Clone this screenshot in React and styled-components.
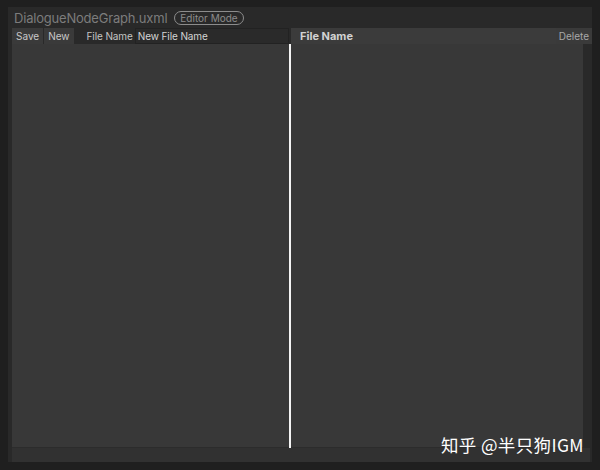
import React from "react";
import styled, { createGlobalStyle } from "styled-components";

const Global = createGlobalStyle`
  html, body { margin: 0; padding: 0; background: #1f1f1f; }
  body { font-family: Inter, "Noto Sans", "Liberation Sans", sans-serif; }
  * { box-sizing: border-box; }
`;

const Screen = styled.div`
  width: 600px;
  height: 470px;
  background: #1f1f1f;
  padding: 7px 8px 8px 8px;
  position: relative;
`;

const Window = styled.div`
  width: 584px;
  height: 455px;
  background: #292929;
  display: flex;
  flex-direction: column;
`;

const TitleBar = styled.div`
  height: 21px;
  display: flex;
  align-items: center;
  gap: 7px;
  padding-left: 6px;
`;

const Title = styled.span`
  font-size: 13px;
  color: #7c7c7c;
  letter-spacing: -0.2px;
`;

const Pill = styled.span`
  font-size: 10px;
  color: #8c8c8c;
  border: 1px solid #8c8c8c;
  border-radius: 8px;
  padding: 0 5px;
  line-height: 12px;
`;

const Body = styled.div`
  flex: 1;
  display: flex;
  padding-left: 4px;
  min-height: 0;
`;

const Pane = styled.div`
  display: flex;
  flex-direction: column;
  width: ${(p) => p.$width};
  flex: ${(p) => (p.$grow ? 1 : "none")};
`;

const Toolbar = styled.div`
  height: 16px;
  display: flex;
  align-items: stretch;
  gap: 1px;
  background: ${(p) => p.$bg || "transparent"};
`;

const ToolButton = styled.div`
  background: #3a3a3a;
  color: ${(p) => p.$color || "#c8c8c8"};
  font-size: 10px;
  padding: 0 ${(p) => p.$px || "4px"};
  display: flex;
  align-items: center;
`;

const Label = styled.span`
  font-size: 10px;
  letter-spacing: -0.1px;
  color: #c4c4c4;
  display: flex;
  align-items: center;
  margin-left: 12px;
  margin-right: 1px;
`;

const TextField = styled.div`
  flex: 1;
  background: #2a2a2a;
  border: 1px solid #222;
  color: #d4d4d4;
  font-size: 10px;
  letter-spacing: -0.1px;
  display: flex;
  align-items: center;
  padding-left: 2px;
`;

const Header = styled.span`
  flex: 1;
  font-size: 11px;
  font-weight: 700;
  color: #d2d2d2;
  padding-left: 9px;
  display: flex;
  align-items: center;
`;

const Content = styled.div`
  flex: 1;
  background: #383838;
  border-bottom: 1px solid #2c2c2c;
  margin-right: ${(p) => p.$mr || 0};
`;

const Splitter = styled.div`
  width: 2px;
  background: #f4f4f4;
  margin-top: 16px;
`;

const Footer = styled.div`
  height: 14px;
  background: #313131;
  margin-left: 4px;
  margin-right: 2px;
`;

const Watermark = styled.div`
  position: absolute;
  left: 441px;
  top: 432px;
  color: #ffffff;
  font-size: 17.5px;
  font-family: "Noto Sans CJK SC", "Noto Sans", sans-serif;
  letter-spacing: 0.35px;
  white-space: nowrap;
`;

export default function App() {
  return (
    <>
      <Global />
      <Screen>
        <Window>
          <TitleBar>
            <Title>DialogueNodeGraph.uxml</Title>
            <Pill>Editor Mode</Pill>
          </TitleBar>
          <Body>
            <Pane $width="277px">
              <Toolbar>
                <ToolButton>Save</ToolButton>
                <ToolButton>New</ToolButton>
                <Label>File Name</Label>
                <TextField>New File Name</TextField>
              </Toolbar>
              <Content />
            </Pane>
            <Splitter />
            <Pane $grow>
              <Toolbar $bg="#3b3b3b">
                <Header>File Name</Header>
                <ToolButton $color="#a8a8a8" $px="3px">Delete</ToolButton>
              </Toolbar>
              <Content $mr="9px" />
            </Pane>
          </Body>
          <Footer />
        </Window>
        <Watermark>知乎 @半只狗IGM</Watermark>
      </Screen>
    </>
  );
}
